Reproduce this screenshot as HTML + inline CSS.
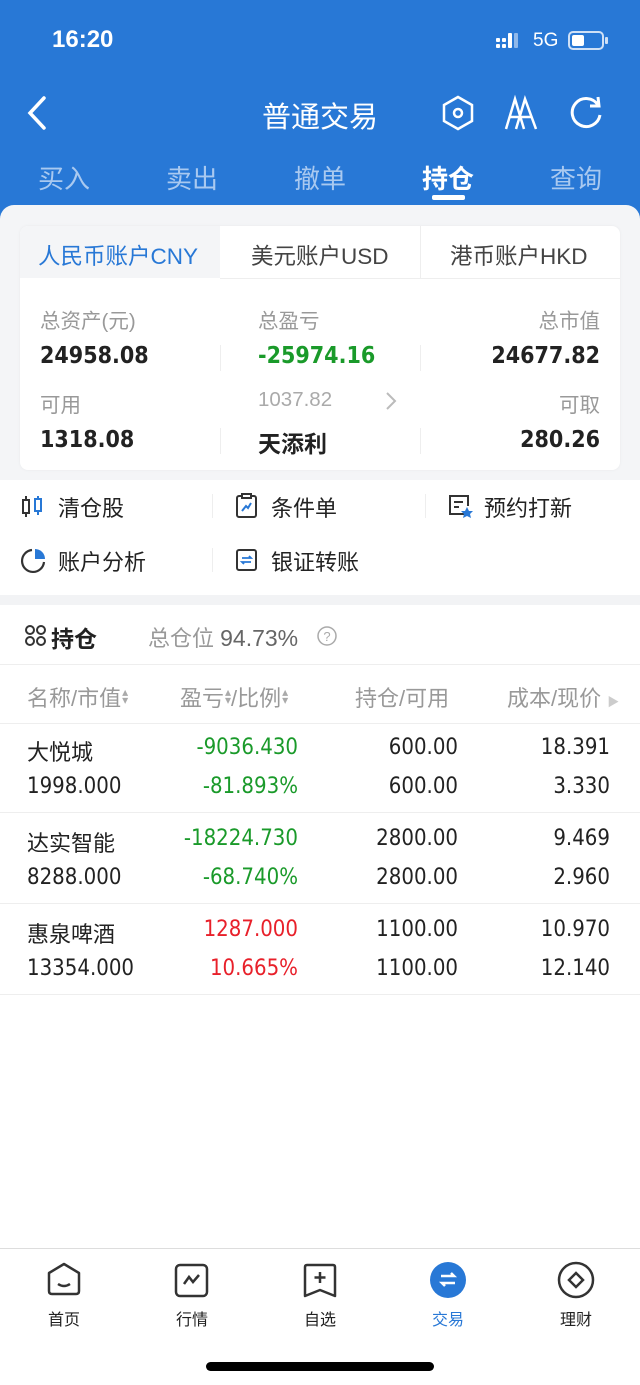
<!DOCTYPE html>
<html><head><meta charset="utf-8"><style>
*{margin:0;padding:0;box-sizing:border-box}
body{width:640px;height:1385px;position:relative;background:#fff;font-family:"Liberation Sans","Noto Sans CJK SC",sans-serif;overflow:hidden;color:#222}
.a{position:absolute;white-space:nowrap}
.blue{background:#2878d6}
.g{color:#1a9a2a}.r{color:#e8202a}.gr{color:#999}
.num{font-family:"DejaVu Sans Condensed","Liberation Sans",sans-serif}
.t{font-size:22px}
.tn{font-size:22px;font-family:"DejaVu Sans Condensed","Liberation Sans",sans-serif}
.ar{font-size:12px;color:#aaa;display:inline-block;line-height:8px;vertical-align:2px;margin-left:1px}
</style></head><body>
<div class="a blue" style="left:0;top:0;width:640px;height:225px"></div>
<div class="a" style="left:52px;top:26px;color:#fff;font-size:24px;font-weight:bold">16:20</div>
<div class="a" style="left:496px;top:32px;width:24px;height:18px">
<svg width="24" height="18"><g fill="#fff"><rect x="0" y="6" width="4" height="4" rx="1"/><rect x="0" y="12" width="4" height="4" rx="1"/><rect x="6" y="6" width="4" height="4" rx="1"/><rect x="6" y="12" width="4" height="4" rx="1"/><rect x="12" y="1" width="4" height="15" rx="1"/><rect x="18" y="1" width="4" height="15" rx="1" fill="#8fb8ea"/></g></svg></div>
<div class="a" style="left:533px;top:30px;color:#fff;font-size:19px">5G</div>
<div class="a" style="left:568px;top:31px;width:36px;height:19px;border:2px solid #cfe0f6;border-radius:5px"><div style="margin:2px;width:12px;height:11px;background:#fff;border-radius:2px"></div></div>
<div class="a" style="left:605px;top:37px;width:3px;height:7px;background:#cfe0f6;border-radius:1px"></div>
<svg class="a" style="left:22px;top:94px" width="30" height="40"><path d="M22 4 L8 19 L22 34" fill="none" stroke="#fff" stroke-width="3.5" stroke-linecap="round"/></svg>
<div class="a" style="left:262px;top:94px;color:#fff;font-size:29px">普通交易</div>
<svg class="a" style="left:438px;top:93px" width="40" height="40"><path d="M20 4 L34 12 L34 28 L20 36 L6 28 L6 12 Z" fill="none" stroke="#fff" stroke-width="2.5"/><circle cx="20" cy="20" r="4" fill="none" stroke="#fff" stroke-width="2.5"/></svg>
<svg class="a" style="left:500px;top:93px" width="42" height="40"><path d="M6 36 L15 6 L24 36 M10 24 L20 24 M16 36 L25 6 L36 36 M20 24 L32 24" fill="none" stroke="#fff" stroke-width="2.5"/></svg>
<svg class="a" style="left:566px;top:93px" width="40" height="40"><path d="M32 12 A14 14 0 1 0 34 22" fill="none" stroke="#fff" stroke-width="3"/><path d="M32 4 L33 13 L24 13" fill="none" stroke="#fff" stroke-width="3"/></svg>
<div class="a" style="left:38px;top:159px;color:#a9c9f0;font-size:26px">买入</div>
<div class="a" style="left:166px;top:159px;color:#a9c9f0;font-size:26px">卖出</div>
<div class="a" style="left:294px;top:159px;color:#a9c9f0;font-size:26px">撤单</div>
<div class="a" style="left:422px;top:159px;color:#fff;font-size:26px;font-weight:bold">持仓</div>
<div class="a" style="left:432px;top:195px;width:33px;height:5px;background:#fff;border-radius:2px"></div>
<div class="a" style="left:550px;top:159px;color:#a9c9f0;font-size:26px">查询</div>
<div class="a" style="left:0;top:205px;width:640px;height:390px;background:#f4f5f7;border-radius:14px 14px 0 0"></div>
<div class="a" style="left:0;top:480px;width:640px;height:115px;background:#fff"></div>
<div class="a" style="left:20px;top:226px;width:600px;height:244px;background:#fff;border-radius:8px;box-shadow:0 0 3px rgba(0,0,0,.05)"></div>
<div class="a" style="left:20px;top:226px;width:200px;height:52px;background:#f4f5f7;border-radius:8px 0 0 0"></div>
<div class="a" style="left:220px;top:278px;width:400px;height:1px;background:#eee"></div>
<div class="a" style="left:420px;top:226px;width:1px;height:52px;background:#eee"></div>
<div class="a" style="left:38px;top:239px;color:#2878d6;font-size:22.5px">人民币账户CNY</div>
<div class="a" style="left:251px;top:239px;color:#444;font-size:22.5px">美元账户USD</div>
<div class="a" style="left:450px;top:239px;color:#444;font-size:22.5px">港币账户HKD</div>
<div class="a gr" style="left:40px;top:304px;font-size:20.5px">总资产(元)</div>
<div class="a gr" style="left:258px;top:304px;font-size:20.5px">总盈亏</div>
<div class="a gr" style="right:40px;top:304px;font-size:20.5px">总市值</div>
<div class="a num" style="left:40px;top:343px;font-size:23px;font-weight:bold">24958.08</div>
<div class="a num g" style="left:258px;top:343px;font-size:23px;font-weight:bold">-25974.16</div>
<div class="a num" style="right:40px;top:343px;font-size:23px;font-weight:bold">24677.82</div>
<div class="a" style="left:220px;top:345px;width:1px;height:26px;background:#eee"></div>
<div class="a" style="left:420px;top:345px;width:1px;height:26px;background:#eee"></div>
<div class="a gr" style="left:40px;top:388px;font-size:20.5px">可用</div>
<div class="a" style="left:258px;top:388px;font-size:20.5px;color:#aaa">1037.82</div>
<svg class="a" style="left:383px;top:390px" width="16" height="22"><path d="M4 3 L12 11 L4 19" fill="none" stroke="#bbb" stroke-width="2"/></svg>
<div class="a gr" style="right:40px;top:388px;font-size:20.5px">可取</div>
<div class="a num" style="left:40px;top:427px;font-size:23px;font-weight:bold">1318.08</div>
<div class="a" style="left:258px;top:425px;font-size:23px;font-weight:bold">天添利</div>
<div class="a num" style="right:40px;top:427px;font-size:23px;font-weight:bold">280.26</div>
<div class="a" style="left:220px;top:428px;width:1px;height:26px;background:#eee"></div>
<div class="a" style="left:420px;top:428px;width:1px;height:26px;background:#eee"></div>
<svg class="a" style="left:20px;top:494px" width="28" height="26"><g fill="none" stroke="#333" stroke-width="2"><rect x="3" y="6" width="6" height="13"/><path d="M6 2v4M6 19v4"/></g><g fill="none" stroke="#2878d6" stroke-width="2"><rect x="15" y="5" width="6" height="12"/><path d="M18 2v3M18 17v4"/></g></svg>
<div class="a t" style="left:58px;top:491px">清仓股</div>
<div class="a" style="left:212px;top:494px;width:1px;height:24px;background:#eee"></div>
<svg class="a" style="left:234px;top:492px" width="26" height="28"><rect x="3" y="4" width="19" height="21" rx="2" fill="none" stroke="#333" stroke-width="2"/><rect x="8" y="2" width="9" height="4" fill="#fff" stroke="#333" stroke-width="2"/><path d="M8 19 L12 14 L14 16 L17 11" fill="none" stroke="#2878d6" stroke-width="2"/></svg>
<div class="a t" style="left:271px;top:491px">条件单</div>
<div class="a" style="left:425px;top:494px;width:1px;height:24px;background:#eee"></div>
<svg class="a" style="left:447px;top:492px" width="28" height="28"><path d="M18 22 H3 V4 H21 V14" fill="none" stroke="#333" stroke-width="2"/><path d="M7 10 H16 M7 15 H12" stroke="#333" stroke-width="2"/><path d="M20 15 L22 19 L26 19 L23 22 L24 26 L20 24 L16 26 L17 22 L14 19 L18 19 Z" fill="#2878d6"/></svg>
<div class="a t" style="left:484px;top:491px">预约打新</div>
<svg class="a" style="left:20px;top:546px" width="28" height="28"><path d="M12 4 A11 11 0 1 0 24 16" fill="none" stroke="#333" stroke-width="2.2"/><path d="M15 3 A10 10 0 0 1 25 13 H15 Z" fill="#2878d6"/></svg>
<div class="a t" style="left:58px;top:545px">账户分析</div>
<div class="a" style="left:212px;top:548px;width:1px;height:24px;background:#eee"></div>
<svg class="a" style="left:234px;top:546px" width="26" height="28"><rect x="3" y="4" width="19" height="20" rx="2" fill="none" stroke="#333" stroke-width="2"/><path d="M8 12 H17 L15 10 M17 16 H8 L10 18" fill="none" stroke="#2878d6" stroke-width="1.8"/></svg>
<div class="a t" style="left:271px;top:545px">银证转账</div>
<div class="a" style="left:0;top:595px;width:640px;height:10px;background:#f2f3f5"></div>
<svg class="a" style="left:24px;top:624px" width="24" height="24"><g fill="none" stroke="#333" stroke-width="2"><circle cx="6" cy="6" r="4"/><circle cx="17" cy="6" r="4"/><circle cx="6" cy="17" r="4"/><circle cx="17" cy="17" r="4"/></g></svg>
<div class="a" style="left:51px;top:620px;font-size:23px;font-weight:bold">持仓</div>
<div class="a" style="left:148px;top:621px;font-size:22px;color:#999">总仓位 <span style="color:#666;font-size:23px">94.73%</span></div>
<svg class="a" style="left:316px;top:625px" width="22" height="22"><circle cx="11" cy="11" r="9" fill="none" stroke="#aaa" stroke-width="1.5"/><text x="11" y="16" text-anchor="middle" font-size="13" fill="#aaa" font-family="Liberation Sans">?</text></svg>
<div class="a" style="left:0;top:664px;width:640px;height:1px;background:#eee"></div>
<div class="a t" style="left:27px;top:681px;color:#999">名称/市值<span class="ar">▴<br>▾</span></div>
<div class="a t" style="left:180px;top:681px;color:#999">盈亏<span class="ar">▴<br>▾</span>/比例<span class="ar">▴<br>▾</span></div>
<div class="a t" style="left:355px;top:681px;color:#999">持仓/可用</div>
<div class="a t" style="left:507px;top:681px;color:#999">成本/现价 <span style="font-size:12px;color:#ccc">▶</span></div>
<div class="a" style="left:0;top:723px;width:640px;height:1px;background:#eee"></div>

<div class="a t" style="left:27px;top:735px">大悦城</div>
<div class="a tn g" style="right:342px;top:735px">-9036.430</div>
<div class="a tn" style="right:182px;top:735px">600.00</div>
<div class="a tn" style="right:30px;top:735px">18.391</div>
<div class="a tn" style="left:27px;top:774px">1998.000</div>
<div class="a tn g" style="right:342px;top:774px">-81.893%</div>
<div class="a tn" style="right:182px;top:774px">600.00</div>
<div class="a tn" style="right:30px;top:774px">3.330</div>
<div class="a" style="left:0;top:812px;width:640px;height:1px;background:#eee"></div>

<div class="a t" style="left:27px;top:826px">达实智能</div>
<div class="a tn g" style="right:342px;top:826px">-18224.730</div>
<div class="a tn" style="right:182px;top:826px">2800.00</div>
<div class="a tn" style="right:30px;top:826px">9.469</div>
<div class="a tn" style="left:27px;top:865px">8288.000</div>
<div class="a tn g" style="right:342px;top:865px">-68.740%</div>
<div class="a tn" style="right:182px;top:865px">2800.00</div>
<div class="a tn" style="right:30px;top:865px">2.960</div>
<div class="a" style="left:0;top:903px;width:640px;height:1px;background:#eee"></div>

<div class="a t" style="left:27px;top:917px">惠泉啤酒</div>
<div class="a tn r" style="right:342px;top:917px">1287.000</div>
<div class="a tn" style="right:182px;top:917px">1100.00</div>
<div class="a tn" style="right:30px;top:917px">10.970</div>
<div class="a tn" style="left:27px;top:956px">13354.000</div>
<div class="a tn r" style="right:342px;top:956px">10.665%</div>
<div class="a tn" style="right:182px;top:956px">1100.00</div>
<div class="a tn" style="right:30px;top:956px">12.140</div>
<div class="a" style="left:0;top:994px;width:640px;height:1px;background:#eee"></div>

<div class="a" style="left:0;top:1248px;width:640px;height:1px;background:#ddd"></div>
<svg class="a" style="left:46px;top:1261px" width="36" height="36"><path d="M3 12 L18 3 L33 12 V30 Q33 33 30 33 H6 Q3 33 3 30 Z" fill="none" stroke="#333" stroke-width="2.5" stroke-linejoin="round"/><path d="M12 23 Q18 27 24 23" fill="none" stroke="#333" stroke-width="2.5"/></svg>
<div class="a" style="left:48px;top:1306px;font-size:16px">首页</div>
<svg class="a" style="left:174px;top:1263px" width="36" height="36"><rect x="2" y="2" width="31" height="31" rx="4" fill="none" stroke="#333" stroke-width="2.5"/><path d="M10 21 L15 14 L19 19 L25 12" fill="none" stroke="#333" stroke-width="2.5"/></svg>
<div class="a" style="left:176px;top:1306px;font-size:16px">行情</div>
<svg class="a" style="left:302px;top:1263px" width="36" height="36"><path d="M3 4 Q3 2 5 2 H31 Q33 2 33 4 V33 L18 27 L3 33 Z" fill="none" stroke="#333" stroke-width="2.5" stroke-linejoin="round"/><path d="M18 9 V20 M12.5 14.5 H23.5" stroke="#333" stroke-width="2.5"/></svg>
<div class="a" style="left:304px;top:1306px;font-size:16px">自选</div>
<svg class="a" style="left:429px;top:1261px" width="38" height="38"><circle cx="19" cy="19" r="18" fill="#2878d6"/><path d="M12 15 H25 L22 12 M26 22 H13 L16 25" fill="none" stroke="#fff" stroke-width="2.5"/></svg>
<div class="a" style="left:432px;top:1306px;font-size:16px;color:#2878d6">交易</div>
<svg class="a" style="left:557px;top:1261px" width="38" height="38"><circle cx="19" cy="19" r="17" fill="none" stroke="#333" stroke-width="2.5"/><path d="M19 12 L26 19 L19 26 L12 19 Z" fill="none" stroke="#333" stroke-width="2.5"/></svg>
<div class="a" style="left:560px;top:1306px;font-size:16px">理财</div>
<div class="a" style="left:206px;top:1362px;width:228px;height:9px;background:#000;border-radius:5px"></div>
</body></html>
